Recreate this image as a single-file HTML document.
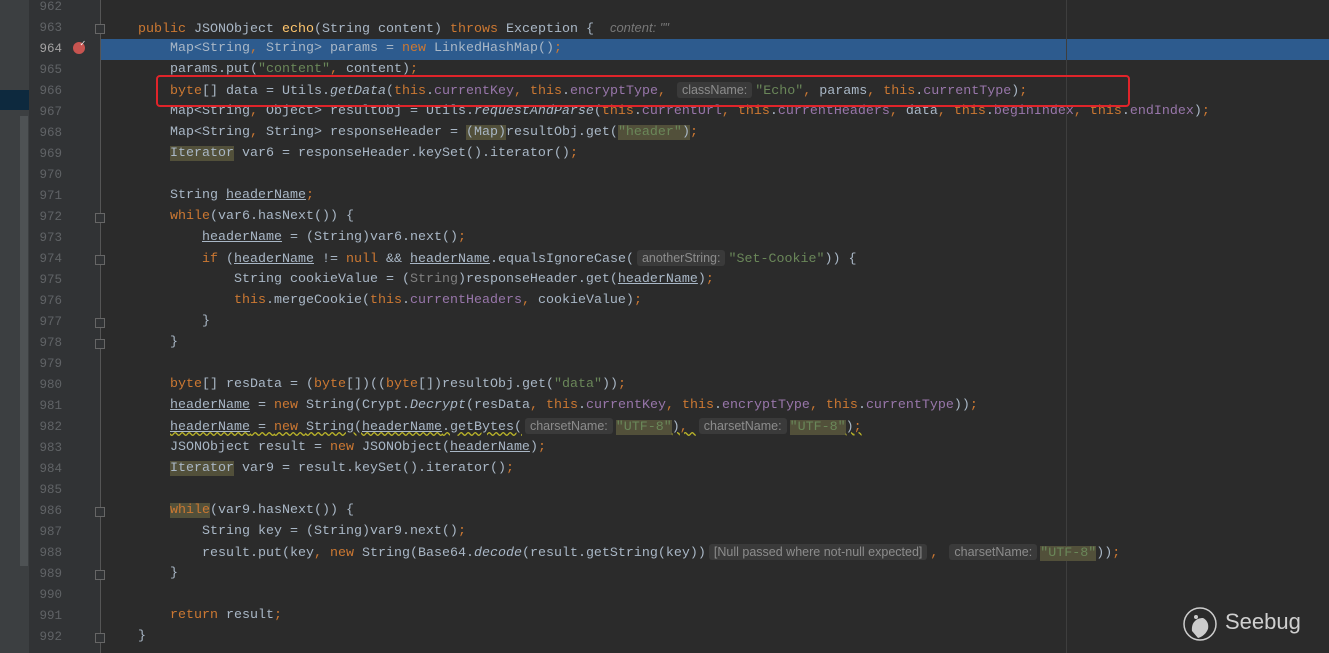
<!DOCTYPE html>
<html><head><meta charset="utf-8"><style>
body{margin:0;width:1329px;height:653px;overflow:hidden;background:#2b2b2b;position:relative;font-family:"Liberation Mono",monospace;}
#side{position:absolute;left:0;top:0;width:29px;height:653px;background:#3c3f41;}
#side .sel{position:absolute;left:0;top:90px;width:29px;height:20px;background:#0d293e;}
#side .sb{position:absolute;left:20px;top:116px;width:8px;height:450px;background:#4e5254;}
#gut{position:absolute;left:29px;top:0;width:71px;height:653px;background:#313335;border-right:1px solid #555;}
#margin{position:absolute;left:1066px;top:0;width:1px;height:653px;background:#3e3e3e;}
.hl{position:absolute;left:101px;top:39px;width:1228px;height:21px;background:#2d5b8e;}
.ln{position:absolute;left:29px;width:33px;text-align:right;font-size:12.5px;color:#606366;line-height:21px;}
.c{position:absolute;left:138px;font-size:13.33px;line-height:21px;color:#a9b7c6;white-space:pre;margin-top:-1px}
.k{color:#cc7832}.s{color:#6a8759}.f{color:#9876aa}.m{color:#ffc66d}.i{font-style:italic}
.u{text-decoration:underline}
.h{font-family:"Liberation Sans",sans-serif;font-size:12.5px;color:#8c8c8c;background:#3a3a3a;border-radius:3px;padding:1px 5px;margin:0 3px}
.y{background:#52503a}
.w{text-decoration:underline wavy #bbb529;}
#box{position:absolute;left:156px;top:75px;width:970px;height:28px;border:2px solid #e0242a;border-radius:4px;}
.fold{position:absolute;left:95px;width:8px;height:8px;border:1px solid #666;background:#313335;}
</style></head><body>
<div id="side"><div class="sel"></div><div class="sb"></div></div>
<div id="gut"></div>
<div class="hl"></div>
<div id="margin"></div>
<div class="ln" style="top:-3px">962</div>
<div class="ln" style="top:18px">963</div>
<div class="ln" style="top:39px;color:#a4a3a3">964</div>
<div class="ln" style="top:60px">965</div>
<div class="ln" style="top:81px">966</div>
<div class="ln" style="top:102px">967</div>
<div class="ln" style="top:123px">968</div>
<div class="ln" style="top:144px">969</div>
<div class="ln" style="top:165px">970</div>
<div class="ln" style="top:186px">971</div>
<div class="ln" style="top:207px">972</div>
<div class="ln" style="top:228px">973</div>
<div class="ln" style="top:249px">974</div>
<div class="ln" style="top:270px">975</div>
<div class="ln" style="top:291px">976</div>
<div class="ln" style="top:312px">977</div>
<div class="ln" style="top:333px">978</div>
<div class="ln" style="top:354px">979</div>
<div class="ln" style="top:375px">980</div>
<div class="ln" style="top:396px">981</div>
<div class="ln" style="top:417px">982</div>
<div class="ln" style="top:438px">983</div>
<div class="ln" style="top:459px">984</div>
<div class="ln" style="top:480px">985</div>
<div class="ln" style="top:501px">986</div>
<div class="ln" style="top:522px">987</div>
<div class="ln" style="top:543px">988</div>
<div class="ln" style="top:564px">989</div>
<div class="ln" style="top:585px">990</div>
<div class="ln" style="top:606px">991</div>
<div class="ln" style="top:627px">992</div>
<div style="position:absolute;left:73px;top:42px;width:12px;height:12px;border-radius:50%;background:#c75450"></div>
<div style="position:absolute;left:80px;top:39px;color:#eee;font-size:9px">✓</div>
<div class="fold" style="top:24px"></div><div class="fold" style="top:213px"></div><div class="fold" style="top:255px"></div><div class="fold" style="top:318px"></div><div class="fold" style="top:339px"></div><div class="fold" style="top:507px"></div><div class="fold" style="top:570px"></div><div class="fold" style="top:633px"></div>

<div class="c" style="top:18px"><span class="k">public </span>JSONObject <span class="m">echo</span>(String content) <span class="k">throws </span>Exception {  <span class="i" style="color:#787878;font-family:'Liberation Sans',sans-serif;font-size:13px">content: ""</span></div>
<div class="c" style="top:39px">    Map&lt;String<span class="k">, </span>String&gt; params = <span class="k">new </span>LinkedHashMap()<span class="k">;</span></div>
<div class="c" style="top:60px">    params.put(<span class="s">"content"</span><span class="k">, </span>content)<span class="k">;</span></div>
<div class="c" style="top:81px">    <span class="k">byte</span>[] data = Utils.<span class="i">getData</span>(<span class="k">this</span>.<span class="f">currentKey</span><span class="k">, this</span>.<span class="f">encryptType</span><span class="k">, </span><span class="h">className:</span><span class="s">"Echo"</span><span class="k">, </span>params<span class="k">, this</span>.<span class="f">currentType</span>)<span class="k">;</span></div>
<div class="c" style="top:102px">    Map&lt;String<span class="k">, </span>Object&gt; resultObj = Utils.<span class="i">requestAndParse</span>(<span class="k">this</span>.<span class="f">currentUrl</span><span class="k">, this</span>.<span class="f">currentHeaders</span><span class="k">, </span>data<span class="k">, this</span>.<span class="f">beginIndex</span><span class="k">, this</span>.<span class="f">endIndex</span>)<span class="k">;</span></div>
<div class="c" style="top:123px">    Map&lt;String<span class="k">, </span>String&gt; responseHeader = <span class="y">(Map)</span>resultObj.get(<span class="s y">"header"</span><span class="y">)</span><span class="k">;</span></div>
<div class="c" style="top:144px">    <span class="y">Iterator</span> var6 = responseHeader.keySet().iterator()<span class="k">;</span></div>
<div class="c" style="top:186px">    String <span class="u">headerName</span><span class="k">;</span></div>
<div class="c" style="top:207px">    <span class="k">while</span>(var6.hasNext()) {</div>
<div class="c" style="top:228px">        <span class="u">headerName</span> = (String)var6.next()<span class="k">;</span></div>
<div class="c" style="top:249px">        <span class="k">if </span>(<span class="u">headerName</span> != <span class="k">null </span>&amp;&amp; <span class="u">headerName</span>.equalsIgnoreCase(<span class="h">anotherString:</span><span class="s">"Set-Cookie"</span>)) {</div>
<div class="c" style="top:270px">            String cookieValue = (<span style="color:#808080">String</span>)responseHeader.get(<span class="u">headerName</span>)<span class="k">;</span></div>
<div class="c" style="top:291px">            <span class="k">this</span>.mergeCookie(<span class="k">this</span>.<span class="f">currentHeaders</span><span class="k">, </span>cookieValue)<span class="k">;</span></div>
<div class="c" style="top:312px">        }</div>
<div class="c" style="top:333px">    }</div>
<div class="c" style="top:375px">    <span class="k">byte</span>[] resData = (<span class="k">byte</span>[])((<span class="k">byte</span>[])resultObj.get(<span class="s">"data"</span>))<span class="k">;</span></div>
<div class="c" style="top:396px">    <span class="u">headerName</span> = <span class="k">new </span>String(Crypt.<span class="i">Decrypt</span>(resData<span class="k">, this</span>.<span class="f">currentKey</span><span class="k">, this</span>.<span class="f">encryptType</span><span class="k">, this</span>.<span class="f">currentType</span>))<span class="k">;</span></div>
<div class="c" style="top:417px">    <span class="w"><span class="u">headerName</span> = <span class="k">new </span>String(<span class="u">headerName</span>.getBytes(</span><span class="h">charsetName:</span><span class="s y">"UTF-8"</span><span class="w">)<span class="k">, </span></span><span class="h">charsetName:</span><span class="s y">"UTF-8"</span><span class="w">)<span class="k">;</span></span></div>
<div class="c" style="top:438px">    JSONObject result = <span class="k">new </span>JSONObject(<span class="u">headerName</span>)<span class="k">;</span></div>
<div class="c" style="top:459px">    <span class="y">Iterator</span> var9 = result.keySet().iterator()<span class="k">;</span></div>
<div class="c" style="top:501px">    <span class="k y">while</span>(var9.hasNext()) {</div>
<div class="c" style="top:522px">        String key = (String)var9.next()<span class="k">;</span></div>
<div class="c" style="top:543px">        result.put(key<span class="k">, new </span>String(Base64.<span class="i">decode</span>(result.getString(key))<span class="h">[Null passed where not-null expected]</span><span class="k">, </span><span class="h">charsetName:</span><span class="s y">"UTF-8"</span>))<span class="k">;</span></div>
<div class="c" style="top:564px">    }</div>
<div class="c" style="top:606px">    <span class="k">return </span>result<span class="k">;</span></div>
<div class="c" style="top:627px">}</div>
<div id="box"></div>
<svg style="position:absolute;left:1182px;top:605px" width="38" height="38" viewBox="0 0 38 38"><circle cx="18" cy="19" r="16" fill="none" stroke="#ccc" stroke-width="1.5"/><path d="M10 26 C9 18 14 13 21 13 C25 15 27 19 26 24 C24 29 20 32 16 33 Z" fill="#ccc"/><circle cx="14" cy="12" r="2" fill="#ccc"/></svg>
<div style="position:absolute;left:1225px;top:609px;font-family:'Liberation Sans',sans-serif;font-size:22px;color:#cfcfcf">Seebug</div>
</body></html>
